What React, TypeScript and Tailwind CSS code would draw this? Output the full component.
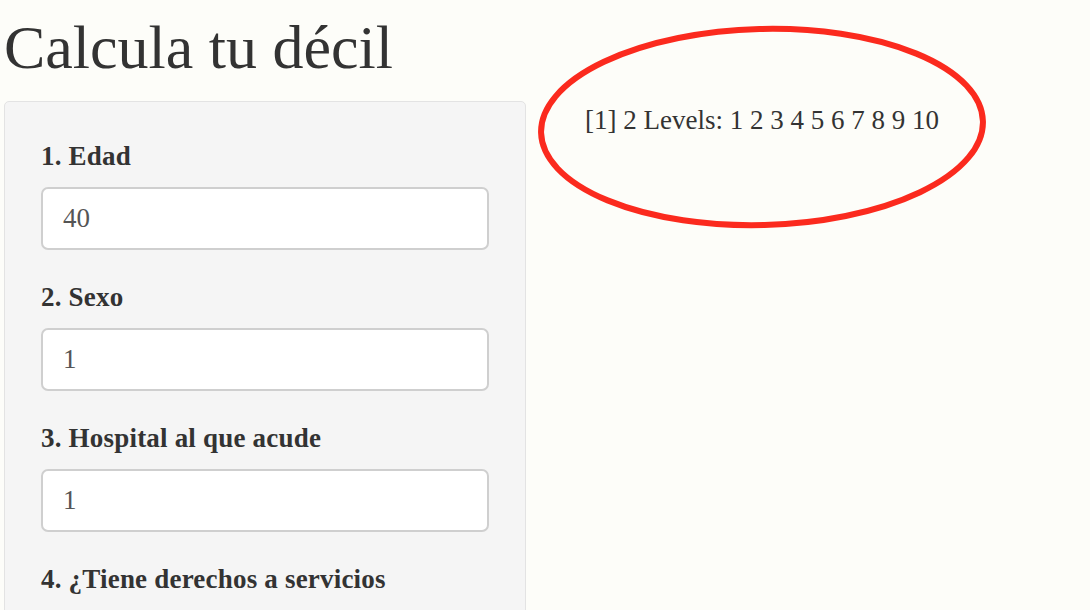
const fields = [
  { label: "1. Edad", value: "40" },
  { label: "2. Sexo", value: "1" },
  { label: "3. Hospital al que acude", value: "1" },
  { label: "4. ¿Tiene derechos a servicios", value: "" },
];

const App = () => {
  return (
    <div className="relative w-full h-[610px] overflow-hidden bg-[#fdfdf9] text-[#333] font-['Liberation_Serif',serif]">
      <h2 className="mt-[16px] pl-[4px] text-[62px] leading-none font-normal">
        Calcula tu décil
      </h2>

      <div className="flex mt-[23px]">
        <div className="ml-[4px] w-[522px] h-[700px] shrink-0 bg-[#f5f5f5] border border-[#e3e3e3] rounded-[5px] pt-[37px] px-[36px]">
          {fields.map((field, index) => (
            <div key={index} className="mb-[30px]">
              <label className="block text-[27px] leading-[34px] font-bold tracking-[0.2px]">
                {field.label}
              </label>
              {field.value !== "" && (
                <div className="mt-[14px] w-[448px] h-[63px] bg-white border-2 border-[#cfcfcf] rounded-[7px] flex items-center pl-[20px] text-[27px] text-[#555]">
                  {field.value}
                </div>
              )}
            </div>
          ))}
        </div>

        <div className="pl-[59px] pt-[6px]">
          <p className="text-[27px] leading-[27px] whitespace-nowrap">
            [1] 2 Levels: 1 2 3 4 5 6 7 8 9 10
          </p>
        </div>
      </div>

      <svg
        className="absolute left-[534px] top-[22px]"
        width="456"
        height="212"
        viewBox="0 0 456 212"
      >
        <ellipse
          cx="228"
          cy="105"
          rx="221"
          ry="98"
          fill="none"
          stroke="#fb2a1e"
          strokeWidth="6"
          transform="rotate(-1.5 228 105)"
        />
      </svg>
    </div>
  );
};

export default App;
